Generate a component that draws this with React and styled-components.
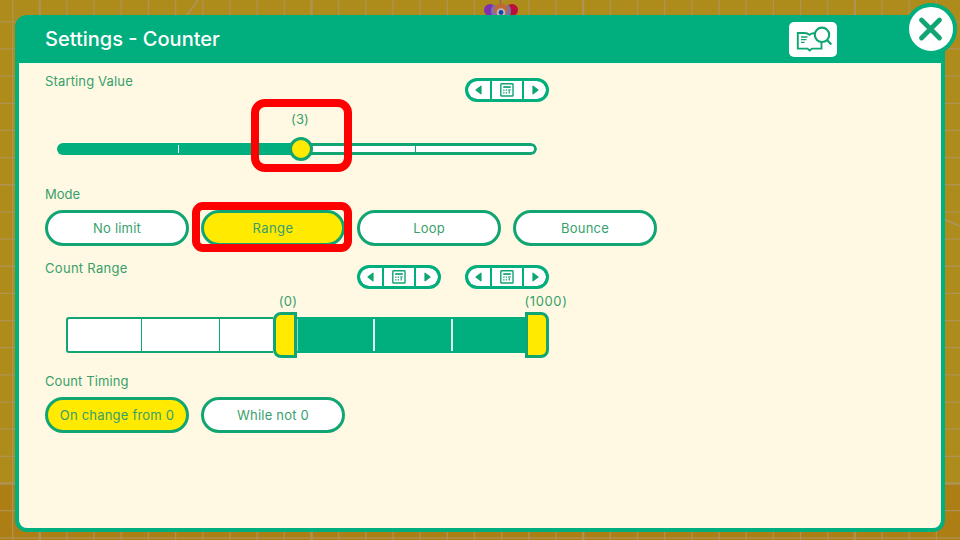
import React from "react";
import styled, { createGlobalStyle } from "styled-components";

const green = "#00ae7e";
const line = "#10a572";
const ink = "#379f6c";
const yellow = "#ffea00";
const cream = "#fff9e3";

const GlobalStyle = createGlobalStyle`
  * { box-sizing: border-box; }
  body { margin: 0; overflow: hidden; background: #ad8c1b; }
`;

const Screen = styled.main`
  position: relative;
  width: 960px;
  height: 540px;
  padding: 15px;
  overflow: hidden;
  font-family: Inter, "Liberation Sans", sans-serif;
  color: ${ink};
`;

const Backdrop = styled.svg`
  position: absolute;
  inset: 0;
`;

const Panel = styled.section`
  position: relative;
  display: flex;
  flex-direction: column;
  width: 930px;
  height: 517px;
  border: 4px solid ${green};
  border-top: 0;
  border-radius: 12px;
  background: ${green};
`;

const Header = styled.header`
  display: flex;
  align-items: center;
  justify-content: space-between;
  height: 48px;
  padding: 0 104px 0 26px;
`;

const Title = styled.h1`
  margin: 0;
  font-size: 20px;
  font-weight: 500;
  line-height: 24px;
  color: #fff;
`;

const HelpButton = styled.button`
  display: block;
  width: 48px;
  height: 35px;
  margin-top: 1px;
  padding: 0;
  border: 0;
  border-radius: 5px;
  background: #fff;
`;

const CloseButton = styled.button`
  position: absolute;
  top: -12px;
  right: -16px;
  width: 52px;
  height: 52px;
  padding: 0;
  border: 4px solid ${green};
  border-radius: 50%;
  background: #fff;
  svg { display: block; }
`;

const Body = styled.div`
  flex: 1;
  padding: 9px 25px 0 25px;
  border: 1px solid #f1fbe9;
  border-bottom-width: 0;
  border-radius: 0 0 8px 8px;
  background: ${cream};
`;

const Field = styled.section`
  height: ${(p) => p.$height}px;
`;

const FieldHead = styled.div`
  display: flex;
  justify-content: space-between;
  width: 504px;
  height: 28px;
`;

const Label = styled.h2`
  margin: 0;
  font-size: 13px;
  font-weight: 400;
  line-height: 16px;
  letter-spacing: ${(p) => p.$track || "0.2px"};
`;

const Steppers = styled.div`
  display: flex;
  gap: 24px;
  padding-top: ${(p) => p.$top}px;
`;

const StepperBox = styled.div`
  display: grid;
  grid-template-columns: 22px 30px 22px;
  gap: 2px;
  width: 84px;
  height: 24px;
  border: 3px solid ${green};
  border-radius: 12px;
  overflow: hidden;
  background: ${green};
`;

const StepButton = styled.button`
  display: grid;
  place-items: center;
  padding: 0;
  border: 0;
  border-radius: ${(p) => (p.$end === "left" ? "9px 0 0 9px" : p.$end === "right" ? "0 9px 9px 0" : "0")};
  background: #fff;
`;

const ValueText = styled.span`
  display: block;
  width: 60px;
  font-size: 13px;
  font-weight: 400;
  line-height: 16px;
  letter-spacing: ${(p) => p.$track || "0.2px"};
  text-align: center;
  white-space: nowrap;
`;

const StartSlider = styled.div`
  width: 480px;
  margin: 10px 0 0 12px;
`;

const StartValue = styled.div`
  display: flex;
  justify-content: center;
  padding-left: 6px;
`;

const StartTrack = styled.div`
  position: relative;
  display: grid;
  grid-template-columns: 122px 120px 117px 121px;
  height: 12px;
  margin-top: 16px;
  border-radius: 6px;
  overflow: hidden;
  background: linear-gradient(to right, ${green} 243px, #fff 243px);
  &::after {
    content: "";
    position: absolute;
    inset: 0;
    border: 3px solid ${line};
    border-radius: 6px;
    clip-path: inset(0 0 0 243px);
  }
`;

const StartSegment = styled.i`
  margin: 2px 0;
  border-right: ${(p) => p.$width || 0}px solid ${(p) => p.$color || "transparent"};
`;

const StartRail = styled.div`
  position: relative;
`;

const Thumb = styled.i`
  position: absolute;
  left: 231.5px;
  top: -6px;
  width: 24px;
  height: 24px;
  border: 3px solid ${line};
  border-radius: 50%;
  background: ${yellow};
`;

const Options = styled.div`
  display: flex;
  gap: 12px;
  padding-top: 8px;
`;

const Option = styled.button`
  width: 144px;
  height: 36px;
  padding: 0;
  border: 3px solid ${line};
  border-radius: 18px;
  background: ${(p) => (p.$active ? yellow : "#fff")};
  color: ${ink};
  font: 400 13px/16px Inter, "Liberation Sans", sans-serif;
  letter-spacing: ${(p) => p.$track || "0.2px"};
  white-space: nowrap;
`;

const RangeValues = styled.div`
  display: flex;
  justify-content: space-between;
  width: 318px;
  margin: 5px 0 0 213px;
`;

const RangeSlider = styled.div`
  display: flex;
  align-items: center;
  width: 483px;
  height: 46px;
  margin: 3px 0 0 21px;
`;

const RangeEmpty = styled.div`
  display: grid;
  grid-template-columns: 74px 78px 1fr;
  width: 207px;
  height: 36px;
  border: 2.5px solid ${line};
  border-right: 0;
  border-radius: 3px 0 0 3px;
  background: #fff;
`;

const RangeFilled = styled.div`
  display: grid;
  grid-template-columns: 1px 77px 78px 1fr;
  width: 228px;
  height: 36px;
  padding: 2px 0;
  background: ${green};
`;

const RangeSegment = styled.i`
  border-right: ${(p) => p.$width}px solid ${(p) => p.$color};
`;

const RangeHandle = styled.i`
  width: 24px;
  height: 46px;
  border: 3px solid ${line};
  border-radius: ${(p) => (p.$side === "left" ? "8px 0 0 8px" : "0 8px 8px 0")};
  background: ${yellow};
`;

const Highlight = styled.div`
  position: absolute;
  left: ${(p) => p.$x}px;
  top: ${(p) => p.$y}px;
  width: ${(p) => p.$w}px;
  height: ${(p) => p.$h}px;
  border: 8px solid #ff0000;
  border-radius: ${(p) => p.$r}px;
  pointer-events: none;
`;

function Workspace() {
  const xs = Array.from({ length: 36 }, (_, i) => 12.6 + i * 27.17);
  const ys = Array.from({ length: 20 }, (_, i) => 21.8 + i * 27.16);
  return (
    <Backdrop width="960" height="540" viewBox="0 0 960 540">
      <rect width="960" height="540" fill="#ad8c1b" />
      <rect y="484" width="960" height="56" fill="#ad7e14" />
      <g stroke="#ae9353" strokeWidth="1.3">
        {xs.map((x, i) => (
          <path key={x} d={`M${x} 0V540`} strokeWidth={i % 10 === 1 ? 2.4 : 1.3} />
        ))}
        {ys.map((y, i) => (
          <path key={y} d={`M0 ${y}H960`} strokeWidth={i === 17 ? 2.6 : 1.3} />
        ))}
        <path d="M187 15L198 0M944 219L960 226" strokeWidth="2" />
      </g>
      <g>
        <path d="M500.5 0v5" stroke="#8d6c34" strokeWidth="1.5" />
        <circle cx="490" cy="10" r="6" fill="#7e2fb2" />
        <circle cx="512" cy="10" r="6" fill="#bb0e3c" />
        <ellipse cx="494.500" cy="11" rx="3.500" ry="6" fill="#8272a0" />
        <ellipse cx="507.500" cy="11" rx="3.500" ry="6" fill="#7773a0" />
        <circle cx="501" cy="10" r="6.500" fill="#c26832" />
        <circle cx="501" cy="12.500" r="4.300" fill="#bcb6c6" />
        <circle cx="501" cy="12.500" r="2.400" fill="#1747a5" />
      </g>
    </Backdrop>
  );
}

function GuideIcon() {
  return (
    <svg width="48" height="35" viewBox="0 0 48 35" fill="none" stroke={line} strokeWidth="1.900">
      <path d="M26.500 11.500Q23 10.700 20.500 12.800Q18.500 11 15.500 11H8.800V26.600H18.500L20.700 28.500L23 26.600H32.500V20" />
      <path d="M12 15H18.500M12 17.700H17.500M12 20.400H15.500" strokeWidth="1.300" />
      <circle cx="33" cy="12.800" r="7.200" fill="#fff" strokeWidth="2.100" />
      <path d="M38 18L42.300 22.500" strokeWidth="2.200" />
    </svg>
  );
}

function CalculatorIcon() {
  return (
    <svg width="14" height="14" viewBox="0 0 14 14">
      <rect x=".8" y=".8" width="12.200" height="12.200" rx=".6" fill="#fff" stroke={line} strokeWidth="1.400" />
      <rect x="3.200" y="3.200" width="7.600" height="1.700" fill={line} />
      <g fill={line}>
        <rect x="3.200" y="6.500" width="1.300" height="1.300" />
        <rect x="5.700" y="6.500" width="1.300" height="1.300" />
        <rect x="3.200" y="9.200" width="1.300" height="1.300" />
        <rect x="5.700" y="9.200" width="1.300" height="1.300" />
        <rect x="8.300" y="6.300" width="2.300" height="1.200" />
        <rect x="8.600" y="7.500" width="1.200" height="3" />
      </g>
    </svg>
  );
}

function Arrow({ left }) {
  return (
    <svg width="8" height="10" viewBox="0 0 8 10">
      <path
        d={left ? "M6 1.200V8.800L1 5Z" : "M2 1.200V8.800L7 5Z"}
        fill={line}
        stroke={line}
        strokeWidth="1.200"
        strokeLinejoin="round"
      />
    </svg>
  );
}

function Stepper() {
  return (
    <StepperBox>
      <StepButton $end="left" aria-label="Decrease"><Arrow left /></StepButton>
      <StepButton aria-label="Enter value"><CalculatorIcon /></StepButton>
      <StepButton $end="right" aria-label="Increase"><Arrow /></StepButton>
    </StepperBox>
  );
}

export default function App() {
  return (
    <Screen>
      <GlobalStyle />
      <Workspace />
      <Panel>
        <Header>
          <Title>Settings - Counter</Title>
          <HelpButton aria-label="Guide"><GuideIcon /></HelpButton>
        </Header>
        <Body>
          <Field $height={113}>
            <FieldHead>
              <Label $track="0.15px">Starting Value</Label>
              <Steppers $top={5}><Stepper /></Steppers>
            </FieldHead>
            <StartSlider>
              <StartValue><ValueText>(3)</ValueText></StartValue>
              <StartRail>
                <StartTrack>
                  <StartSegment $width={1} $color="#f4fff9" />
                  <StartSegment />
                  <StartSegment $width={1} $color={line} />
                  <StartSegment />
                </StartTrack>
                <Thumb />
              </StartRail>
            </StartSlider>
          </Field>
          <Field $height={74}>
            <Label $track="0">Mode</Label>
            <Options>
              <Option>No limit</Option>
              <Option $active $track="0.4px">Range</Option>
              <Option>Loop</Option>
              <Option>Bounce</Option>
            </Options>
          </Field>
          <Field $height={113}>
            <FieldHead>
              <Label $track="0.3px">Count Range</Label>
              <Steppers $top={5}><Stepper /><Stepper /></Steppers>
            </FieldHead>
            <RangeValues>
              <ValueText>(0)</ValueText>
              <ValueText $track="0.6px">(1000)</ValueText>
            </RangeValues>
            <RangeSlider>
              <RangeEmpty>
                <RangeSegment $width={1} $color={line} />
                <RangeSegment $width={1} $color={line} />
              </RangeEmpty>
              <RangeHandle $side="left" />
              <RangeFilled>
                <RangeSegment $width={1} $color="#8fdcbe" />
                <RangeSegment $width={2} $color="#dff5ed" />
                <RangeSegment $width={2} $color="#dff5ed" />
              </RangeFilled>
              <RangeHandle $side="right" />
            </RangeSlider>
          </Field>
          <Field $height={60}>
            <Label $track="0.1px">Count Timing</Label>
            <Options>
              <Option $active>On change from 0</Option>
              <Option>While not 0</Option>
            </Options>
          </Field>
        </Body>
        <CloseButton aria-label="Close">
          <svg width="44" height="44" viewBox="0 0 44 44">
            <path d="M12.500 13L30.500 31M30.500 13L12.500 31" stroke={line} strokeWidth="4.800" strokeLinecap="round" />
          </svg>
        </CloseButton>
      </Panel>
      <Highlight $x={251} $y={99} $w={101} $h={73} $r={14} />
      <Highlight $x={192} $y={202} $w={160} $h={50} $r={11} />
    </Screen>
  );
}
